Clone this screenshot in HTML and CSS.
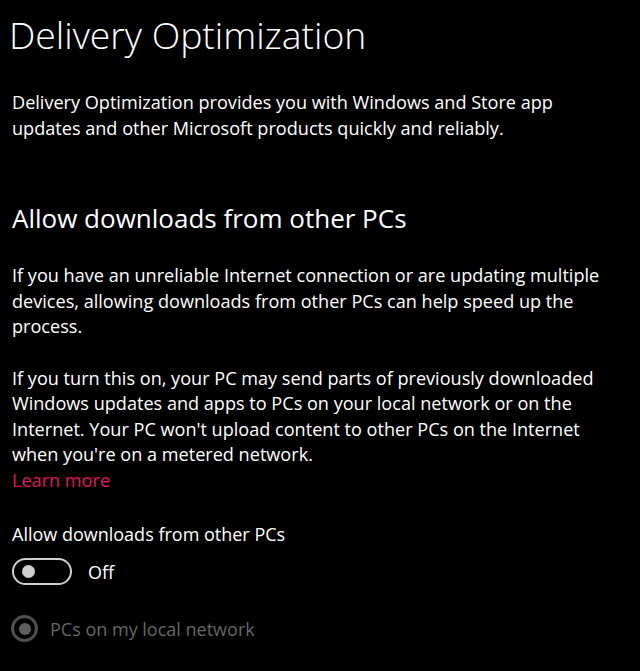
FILE: index.html
```html
<!DOCTYPE html>
<html lang="en">
<head>
<meta charset="utf-8">
<title>Delivery Optimization</title>
<link rel="stylesheet" href="styles.css">
</head>
<body>
<main class="page">
  <h1 class="title">Delivery Optimization</h1>
  <p class="text intro">Delivery Optimization provides you with Windows and Store app updates and other Microsoft products quickly and reliably.</p>
  <h2 class="subtitle">Allow downloads from other PCs</h2>
  <p class="text">If you have an unreliable Internet connection or are updating multiple devices, allowing downloads from other PCs can help speed up the process.</p>
  <p class="text gap">If you turn this on, your PC may send parts of previously downloaded Windows updates and apps to PCs on your local network or on the Internet. Your PC won't upload content to other PCs on the Internet when you're on a metered network.</p>
  <a class="text link" href="#">Learn more</a>
  <div class="label">Allow downloads from other PCs</div>
  <div class="toggle-row">
    <span class="toggle"><span class="thumb"></span></span>
    <span class="toggle-text">Off</span>
  </div>
  <div class="radio-row">
    <span class="radio"><span class="dot"></span></span>
    <span class="radio-text">PCs on my local network</span>
  </div>
</main>
</body>
</html>
```
FILE: styles.css
```css
html, body {
  margin: 0;
  padding: 0;
  background: #000;
}
body {
  color: #fff;
  font-family: "Open Sans", "Noto Sans", sans-serif;
  width: 640px;
  height: 671px;
  overflow: hidden;
}
.page {
  padding: 11px 0 0 12px;
  width: 596px;
}
.title {
  margin: 0 0 0 -3px;
  font-weight: 300;
  font-size: 37.3px;
  line-height: 48px;
}
.text {
  margin: 0;
  font-size: 18.1px;
  line-height: 25.5px;
  display: block;
}
.intro {
  margin-top: 31px;
}
.subtitle {
  margin: 60px 0 0;
  font-weight: 400;
  font-size: 26px;
  line-height: 34px;
}
.subtitle + .text {
  margin-top: 28px;
}
.gap {
  margin-top: 26px;
}
.link {
  color: #e0145e;
  text-decoration: none;
}
.label {
  margin-top: 29px;
  font-size: 18px;
  line-height: 25px;
}
.toggle-row {
  display: flex;
  align-items: center;
  gap: 16px;
  margin-top: 11px;
}
.toggle {
  box-sizing: border-box;
  width: 60px;
  height: 27px;
  border: 2px solid #cfcfcf;
  border-radius: 14px;
  display: flex;
  align-items: center;
  padding-left: 8px;
}
.thumb {
  width: 13px;
  height: 13px;
  border-radius: 50%;
  background: #cfcfcf;
}
.toggle-text {
  font-size: 18px;
}
.radio-row {
  display: flex;
  align-items: center;
  gap: 12px;
  margin-top: 30px;
  margin-left: -1px;
}
.radio {
  box-sizing: border-box;
  width: 27px;
  height: 27px;
  border: 3px solid #4f4f4f;
  border-radius: 50%;
  display: flex;
  align-items: center;
  justify-content: center;
}
.dot {
  width: 12px;
  height: 12px;
  border-radius: 50%;
  background: #5f5f5f;
}
.radio-text {
  font-size: 18px;
  color: #666;
}
```
